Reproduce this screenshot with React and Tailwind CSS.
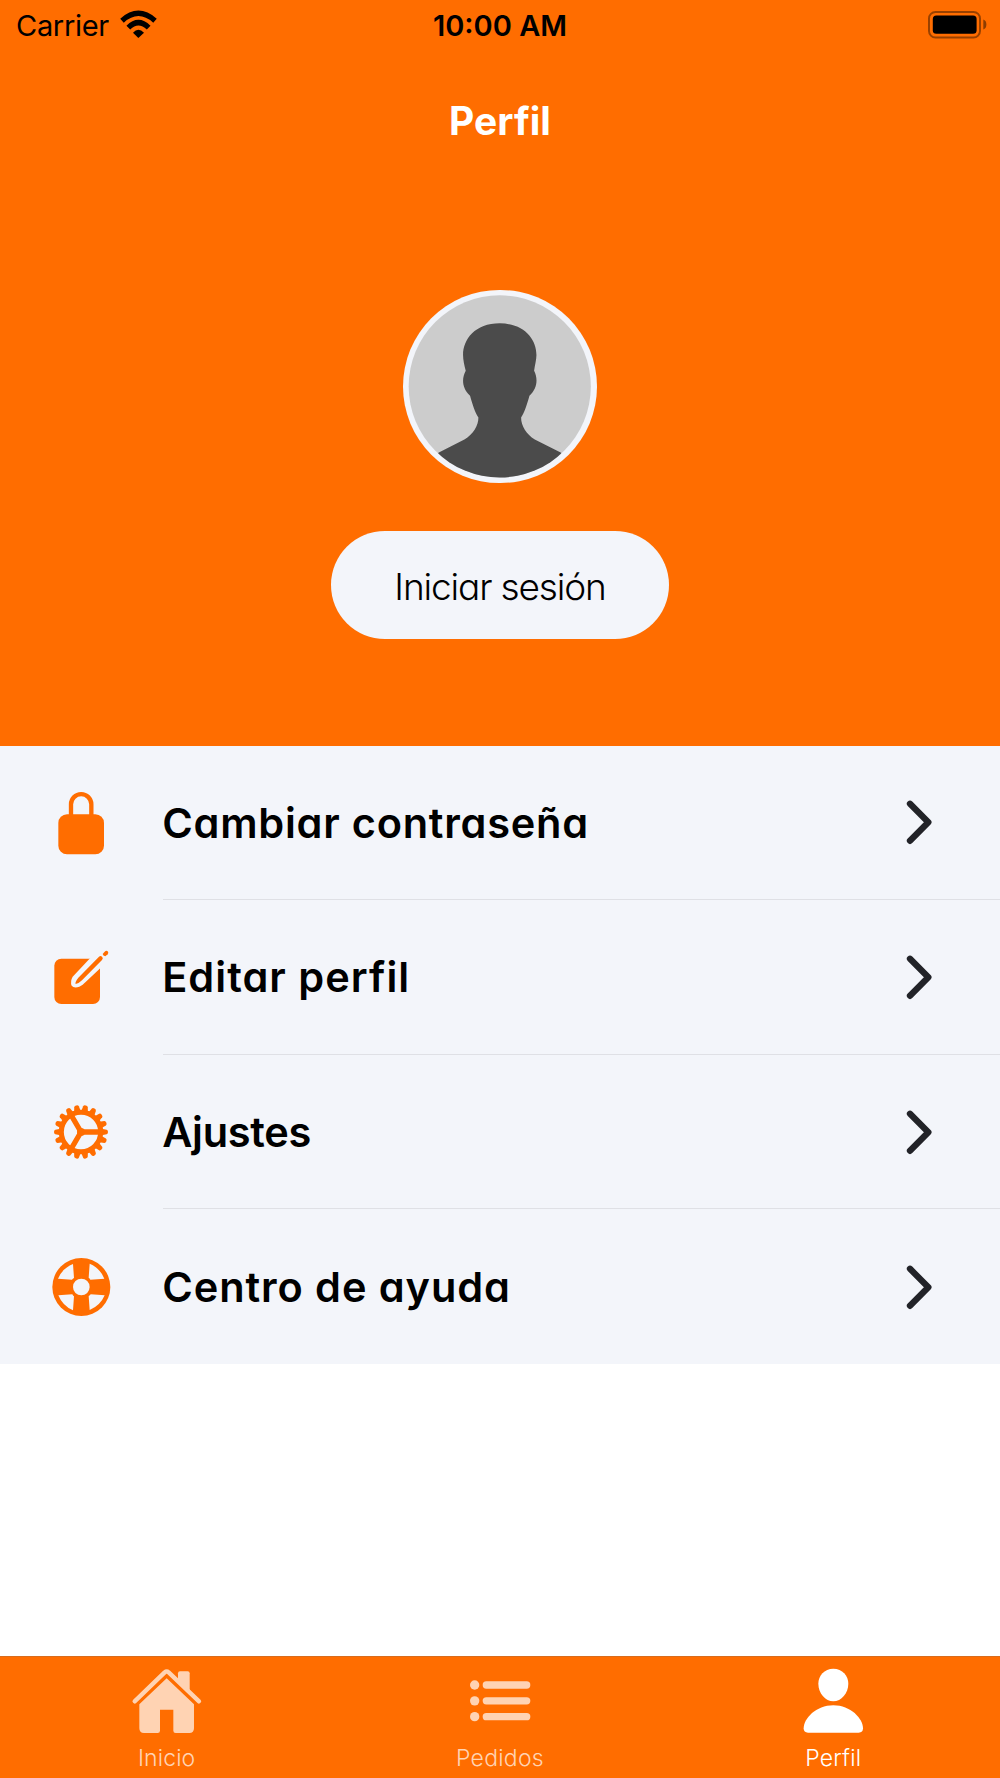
import React from "react";

const ROUND = "font-['Inter',sans-serif] [font-feature-settings:'cv11'_1] whitespace-nowrap";

function LockIcon() {
  return (
    <svg viewBox="0 8 240 240" className="h-20 w-20" fill="#ff6d00">
      <rect x="55" y="102" width="137" height="120" rx="26" />
      <path d="M93 108V72a30.5 30.5 0 0 1 61 0v36" fill="none" stroke="#ff6d00" strokeWidth="13" />
    </svg>
  );
}

function EditIcon() {
  return (
    <svg viewBox="0 -9 240 240" className="h-20 w-20" fill="#ff6d00">
      <rect x="43" y="56" width="137" height="136" rx="21" />
      <path d="M148 57L98 110Q90 124 95 137Q102 146 118 140L128 134L184 82L196 60L160 46Z" fill="#f3f5fa" />
      <path d="M177 50Q182 46 186 50Q191 54 186 60L126 121Q116 131 107 132Q104 127 115 113Z" />
      <path d="M188 42L194 35Q199 30 203 34Q207 38 203 43L196 49Q189 48 188 42Z" />
    </svg>
  );
}

function GearIcon() {
  const teeth = Array.from({ length: 18 }, (_, i) => i * 20 + 10);
  return (
    <svg viewBox="0 6 240 240" className="h-20 w-20" fill="#ff6d00">
      <g transform="translate(123 126)">
        {teeth.map((a) => (
          <path key={a} d="M-10 -62L-7 -77Q-6 -81 0 -81Q6 -81 7 -77L10 -62Z" transform={`rotate(${a})`} />
        ))}
        <circle r="59" fill="none" stroke="#ff6d00" strokeWidth="15" />
        <path d="M0 0H54M0 0L-28 -48M0 0L-28 48" stroke="#ff6d00" strokeWidth="16" />
        <circle r="12" />
      </g>
    </svg>
  );
}

function HelpIcon() {
  const quads = [0, 90, 180, 270];
  return (
    <svg viewBox="0 5 240 240" className="h-20 w-20" fill="#ff6d00">
      <g transform="translate(124 125)">
        <circle r="87" />
        <circle r="25" fill="#f3f5fa" />
        {quads.map((a) => (
          <path key={a} d="M25 -70Q56 -57 69 -25L27 -22Q25 -26 22 -28Z" fill="#f3f5fa" transform={`rotate(${a})`} />
        ))}
      </g>
    </svg>
  );
}

function Chevron() {
  return (
    <svg viewBox="0 0 120 140" className="h-[46.67px] w-10" fill="none" stroke="#222328" strokeWidth="19" strokeLinecap="round" strokeLinejoin="round">
      <path d="M30 14.5L85 70L30 125.5" />
    </svg>
  );
}

function HomeIcon() {
  return (
    <svg viewBox="60 80 220 200" className="h-[66.67px] w-[73.33px]" fill="#ffd3b3">
      <path d="M74 183L164 96Q170 91 176 96L267 183" fill="none" stroke="#ffd3b3" strokeWidth="13" strokeLinecap="round" strokeLinejoin="round" />
      <path d="M204 118V99Q204 93 210 93H233Q239 93 239 99V154Z" />
      <path d="M170 114L252 192V264Q252 278 238 278H197Q190 278 190 271V208H150V271Q150 278 143 278H102Q88 278 88 264V192Z" />
    </svg>
  );
}

function ListIcon() {
  return (
    <svg viewBox="1060 80 220 200" className="h-[66.67px] w-[73.33px]" fill="#ffd3b3">
      {[134, 181.5, 229].map((y) => (
        <g key={y}>
          <circle cx="1095" cy={y} r="14" />
          <rect x="1119" y={y - 11} width="143" height="22" rx="11" />
        </g>
      ))}
    </svg>
  );
}

function UserIcon() {
  return (
    <svg viewBox="81 80 220 200" className="h-[66.67px] w-[73.33px]" fill="#fff">
      <path d="M190 85C217 85 235 106 235 130C235 158 214 183 190 183C166 183 145 158 145 130C145 106 163 85 190 85Z" />
      <path d="M190 195C242 195 279 235 279 264Q279 277 266 277H114Q101 277 101 264C101 235 138 195 190 195Z" />
    </svg>
  );
}

const rows = [
  { label: "Cambiar contraseña", Icon: LockIcon, spacing: "tracking-[0.76px]" },
  { label: "Editar perfil", Icon: EditIcon, spacing: "tracking-[1.02px]" },
  { label: "Ajustes", Icon: GearIcon, spacing: "tracking-[-0.3px]" },
  { label: "Centro de ayuda", Icon: HelpIcon, spacing: "tracking-[0.92px]" },
];

const tabs = [
  { label: "Inicio", Icon: HomeIcon, color: "text-[#ffd3b3]", spacing: "tracking-[0.1px]" },
  { label: "Pedidos", Icon: ListIcon, color: "text-[#ffd3b3]", spacing: "tracking-[0.25px]" },
  { label: "Perfil", Icon: UserIcon, color: "text-white", spacing: "tracking-[0.2px]" },
];

export default function App() {
  return (
    <div className="flex h-[1778px] w-[1000px] flex-col overflow-hidden bg-white">
      <header className="flex h-[745.5px] shrink-0 flex-col items-center bg-[#ff6d00]">
        <div className="grid h-[51px] w-full grid-cols-3 items-start font-['Inter',sans-serif] text-[29px] leading-[51px] text-black">
          <div className="flex items-start gap-[11px] pl-4">
            <span className="tracking-[-0.3px]">Carrier</span>
            <svg viewBox="360 28 111 84" className="mt-[9.5px] h-7 w-[37px]" fill="none" stroke="#000" strokeWidth="16">
              <path d="M366 60Q415 16 465 60" />
              <path d="M385 81Q415 51 446 81" />
              <path d="M399 96Q415 78 432 96L415 112Z" fill="#000" stroke="none" />
            </svg>
          </div>
          <div className="text-center font-semibold">10:00 AM</div>
          <div className="flex justify-end pr-[13px]">
            <svg viewBox="0 0 59 28" className="mt-[10.5px] h-7 w-[59px]">
              <rect x="1" y="1" width="51" height="25.5" rx="6.5" fill="none" stroke="#000" strokeOpacity=".4" strokeWidth="2" />
              <rect x="4.8" y="4.5" width="43.8" height="18.2" rx="3.5" />
              <path d="M55.3 8.5Q58.4 9.5 58.4 13.5Q58.4 17.5 55.3 18.5Z" fillOpacity=".45" />
            </svg>
          </div>
        </div>
        <h1 className={ROUND + " mt-[45px] text-[39px] leading-[50px] font-bold text-white"}>Perfil</h1>
        <div className="mt-[143.5px] h-[193.5px] w-[193.5px] shrink-0 overflow-hidden rounded-full bg-[#f3f5fa]">
          <svg viewBox="250 30 580 580" className="h-full w-full">
            <clipPath id="face"><circle cx="540" cy="319" r="273" /></clipPath>
            <circle cx="540" cy="319" r="273" fill="#ccc" />
            <path clipPath="url(#face)" fill="#4b4b4b" d="M540 130C614 130 650 178 650 225C650 240 645 256 643 272C655 296 653 325 629 347C622 372 614 398 604 412C604 438 620 462 645 478L724 518L760 620H320L356 518L434 478C460 462 476 438 476 412C466 398 458 372 451 347C427 325 425 296 438 272C434 256 430 240 430 225C430 178 466 130 540 130Z" />
          </svg>
        </div>
        <button className={ROUND + " mt-12 flex h-[107.5px] w-[338px] shrink-0 items-center justify-center rounded-full bg-[#f3f5fa] pt-[3px] text-[37px] font-light tracking-[-1.15px] text-black"}>Iniciar sesión</button>
      </header>
      <main className="bg-[#f3f5fa]">
        {rows.map(({ label, Icon, spacing }, i) => (
          <div key={label} className="flex h-[154.65px] pl-10">
            <div className="flex w-[122.7px] shrink-0 items-center"><Icon /></div>
            <div className={"flex flex-1 items-center justify-between pr-[60px] pt-px " + (i < 3 ? "border-b border-[#dfe0e5]" : "")}>
              <span className={ROUND + " -ml-[0.5px] pt-px text-[41.5px] leading-none font-semibold text-black " + spacing}>{label}</span>
              <Chevron />
            </div>
          </div>
        ))}
      </main>
      <nav className="mt-auto grid h-[122.5px] shrink-0 grid-cols-3 border-t border-[#d96c1c] bg-[#ff6d00]">
        {tabs.map(({ label, Icon, color, spacing }) => (
          <div key={label} className="flex flex-col items-center pt-[10px]">
            <Icon />
            <span className={ROUND + " mt-[10px] text-[23px] leading-[30px] font-light " + color + " " + spacing}>{label}</span>
          </div>
        ))}
      </nav>
    </div>
  );
}
